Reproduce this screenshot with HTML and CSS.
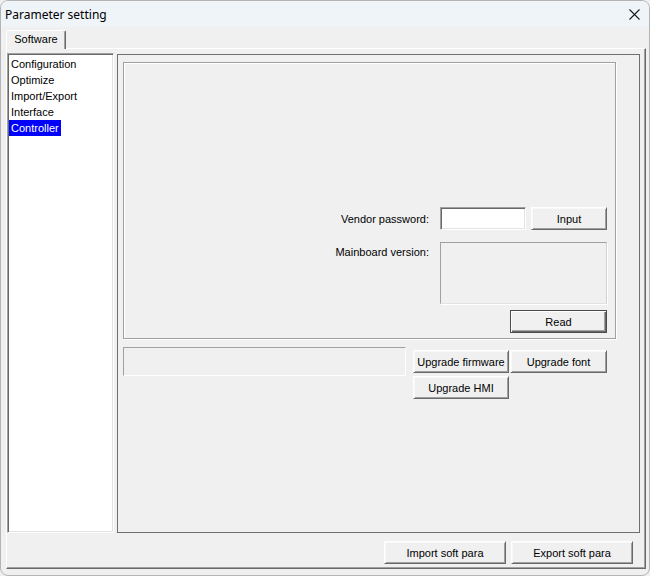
FILE: index.html
```html
<!DOCTYPE html>
<html>
<head>
<meta charset="utf-8">
<title>Parameter setting</title>
<link rel="stylesheet" href="styles.css">
</head>
<body>
<div class="window">
  <div class="titlebar">
    <span class="title">Parameter setting</span>
    <svg class="close" width="11" height="11" viewBox="0 0 11 11"><path d="M0.5 0.5 L10.5 10.5 M10.5 0.5 L0.5 10.5" stroke="#1a1a1a" stroke-width="1.1" fill="none"/></svg>
  </div>
  <div class="tabstrip">
    <div class="tab">Software</div>
  </div>
  <div class="page">
    <div class="page-main">
      <ul class="listbox">
        <li><span class="item">Configuration</span></li>
        <li><span class="item">Optimize</span></li>
        <li><span class="item">Import/Export</span></li>
        <li><span class="item">Interface</span></li>
        <li><span class="item selected">Controller</span></li>
      </ul>
      <div class="panel">
        <div class="group">
          <div class="form">
            <label class="lbl lbl-mid">Vendor password:</label>
            <div class="edit"></div>
            <button class="btn">Input</button>
            <label class="lbl lbl-top">Mainboard version:</label>
            <div class="memo"></div>
            <button class="btn btn-default read">Read</button>
          </div>
        </div>
        <div class="below">
          <div class="progress"></div>
          <div class="upgrade">
            <button class="btn">Upgrade firmware</button>
            <button class="btn">Upgrade font</button>
            <button class="btn">Upgrade HMI</button>
          </div>
        </div>
      </div>
    </div>
    <div class="page-footer">
      <button class="btn foot">Import soft para</button>
      <button class="btn foot">Export soft para</button>
    </div>
  </div>
</div>
</body>
</html>
```
FILE: styles.css
```css
html, body {
  margin: 0;
  padding: 0;
  background: #f0f0f0;
}
.window {
  width: 650px;
  height: 576px;
  box-sizing: border-box;
  border: 1px solid #b4b4b4;
  border-radius: 8px;
  overflow: hidden;
  background: #f0f0f0;
  display: flex;
  flex-direction: column;
  font-family: "Liberation Sans", Arial, sans-serif;
  font-size: 11px;
  color: #000;
}
.titlebar {
  height: 26px;
  flex: none;
  background: #eff4f9;
  display: flex;
  align-items: center;
  padding-left: 4px;
}
.title {
  font-family: "Noto Sans", "Open Sans", sans-serif;
  font-size: 12px;
  color: #000;
  padding-top: 1px;
}
.close {
  margin-left: auto;
  margin-right: 9px;
  display: block;
}
.tabstrip {
  height: 21px;
  flex: none;
  display: flex;
  align-items: flex-end;
  padding-left: 5px;
}
.tab {
  position: relative;
  z-index: 1;
  width: 60px;
  height: 19px;
  margin-bottom: -1px;
  box-sizing: border-box;
  background: #f0f0f0;
  border-top: 1px solid #fff;
  border-left: 1px solid #fff;
  border-right: 1px solid #696969;
  border-radius: 2px 2px 0 0;
  box-shadow: inset -1px 0 0 #a0a0a0;
  text-align: center;
  line-height: 17px;
}
.page {
  margin-left: 5px;
  width: 640px;
  height: 521px;
  flex: none;
  box-sizing: border-box;
  border-top: 1px solid #fff;
  border-left: 1px solid #fff;
  border-right: 1px solid #696969;
  border-bottom: 1px solid #696969;
  box-shadow: inset -1px -1px 0 #a0a0a0;
  display: flex;
  flex-direction: column;
}
.page-main {
  display: flex;
  align-items: flex-start;
  padding-top: 4px;
}
.listbox {
  list-style: none;
  margin: 0;
  width: 107px;
  height: 480px;
  box-sizing: border-box;
  padding: 2px 0 0 1px;
  background: #fff;
  border: 1px solid;
  border-color: #a0a0a0 #fff #fff #a0a0a0;
  box-shadow: inset 1px 1px 0 #696969, inset -1px -1px 0 #e3e3e3;
}
.listbox li {
  height: 16px;
  line-height: 16px;
}
.item {
  display: inline-block;
  padding: 0 2px;
  height: 16px;
}
.item.selected {
  background: #0000ff;
  color: #fff;
}
.panel {
  margin-left: 3px;
  margin-top: 1px;
  width: 523px;
  height: 479px;
  box-sizing: border-box;
  border: 1px solid #6e6e6e;
}
.group {
  margin: 7px 0 0 5px;
  width: 493px;
  height: 277px;
  box-sizing: border-box;
  border: 1px solid #a0a0a0;
  box-shadow: 1px 1px 0 #fff, inset 1px 1px 0 #fff;
  padding: 144px 8px 0 0;
}
.form {
  display: grid;
  grid-template-columns: auto 86px 76px;
  column-gap: 5px;
  justify-content: end;
}
.lbl {
  margin-right: 6px;
  text-align: right;
  white-space: nowrap;
}
.lbl-mid {
  align-self: center;
}
.lbl-top {
  align-self: start;
  margin-top: 16px;
}
.edit {
  height: 23px;
  box-sizing: border-box;
  background: #fff;
  border: 1px solid;
  border-color: #a0a0a0 #fff #fff #a0a0a0;
  box-shadow: inset 1px 1px 0 #696969, inset -1px -1px 0 #e3e3e3;
}
.memo {
  grid-column: 2 / 4;
  margin-top: 12px;
  height: 62px;
  box-sizing: border-box;
  background: #f0f0f0;
  border: 1px solid;
  border-color: #a0a0a0 #d0d0d0 #e3e3e3 #a0a0a0;
  box-shadow: 1px 1px 0 #fff;
}
.btn {
  font-family: "Liberation Sans", Arial, sans-serif;
  font-size: 11px;
  color: #000;
  height: 23px;
  margin: 0;
  padding: 0;
  box-sizing: border-box;
  background: #f0f0f0;
  border: 1px solid;
  border-color: #fff #696969 #696969 #fff;
  box-shadow: inset 1px 1px 0 #f8f8f8, inset -1px -1px 0 #a0a0a0;
  text-align: center;
  white-space: nowrap;
}
.btn-default {
  border: 1px solid #4a4a4a;
  box-shadow: inset 1px 1px 0 #fff, inset -1px -1px 0 #696969, inset -2px -2px 0 #a0a0a0;
}
.read {
  grid-column: 2 / 4;
  justify-self: end;
  width: 97px;
  margin-top: 6px;
}
.below {
  display: flex;
  align-items: flex-start;
  margin: 8px 0 0 5px;
}
.progress {
  width: 283px;
  height: 29px;
  box-sizing: border-box;
  border: 1px solid;
  border-color: #a0a0a0 #fff #fff #a0a0a0;
}
.upgrade {
  display: grid;
  grid-template-columns: 96px 97px;
  column-gap: 1px;
  row-gap: 3px;
  margin: 3px 0 0 7px;
}
.page-footer {
  display: flex;
  justify-content: flex-end;
  gap: 5px;
  padding: 8px 12px 0 0;
}
.foot {
  width: 122px;
}
```
